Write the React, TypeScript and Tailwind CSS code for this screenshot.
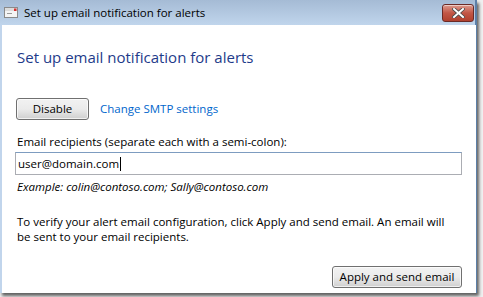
import React from 'react';

const MailIcon = () => (
  <svg width="14" height="11" viewBox="0 0 14 11">
    <rect x="0.5" y="0.5" width="13" height="10" fill="#f4f4f4" stroke="#8a8a8a" />
    <rect x="1" y="1" width="12" height="3" fill="#dcdcdc" />
    <line x1="3" y1="6.5" x2="8" y2="6.5" stroke="#9a9a9a" />
    <rect x="10" y="1.5" width="2.5" height="2.5" fill="#d83030" />
  </svg>
);

const CloseButton = () => (
  <div className="flex h-[18px] w-[32px] items-center justify-center rounded-[3px] border border-[#6b2a26] bg-gradient-to-b from-[#dc9a8e] via-[#c25646] to-[#b0402e] shadow-[inset_0_1px_0_rgba(255,255,255,0.5)]">
    <svg width="13" height="10" viewBox="0 0 13 10">
      <path d="M2 1 L11 9 M11 1 L2 9" stroke="#4a4a4a" strokeWidth="3.6" strokeLinecap="square" />
      <path d="M2 1 L11 9 M11 1 L2 9" stroke="#ffffff" strokeWidth="2" strokeLinecap="square" />
    </svg>
  </div>
);

const WinButton = ({ label, className }: { label: string; className?: string }) => (
  <button
    className={`flex h-[22px] items-center justify-center rounded-[3px] border border-[#707070] bg-gradient-to-b from-[#f2f2f2] via-[#ebebeb] to-[#cfcfcf] text-[11.5px] text-black shadow-[inset_0_0_0_1px_rgba(255,255,255,0.7)] ${className ?? ''}`}
  >
    {label}
  </button>
);

export default function App() {
  return (
    <div className="h-[297px] w-[483px] overflow-hidden bg-[#f0f0f0] font-['Segoe_UI','Open_Sans',sans-serif]">
      <div className="flex h-[293px] w-[477px] flex-col border-r-[2px] border-[#5c7fa8] shadow-[2px_3px_3px_rgba(0,0,0,0.6)]">
        <div className="flex h-[25px] items-center bg-gradient-to-b from-[#a5bbd5] to-[#c0d5ec] pl-[4px] pr-[1px]">
          <MailIcon />
          <span className="ml-[6px] text-[11.5px] text-black">Set up email notification for alerts</span>
          <div className="ml-auto">
            <CloseButton />
          </div>
        </div>
        <div className="flex flex-1 border-l-[2px] border-[#c1d5ec]">
          <div className="flex flex-1 flex-col bg-white pl-[15px] pr-[14px] text-[11.5px] text-black">
            <h1 className="mt-[22px] text-[15px] leading-[20px] text-[#1e3b8a]">Set up email notification for alerts</h1>
            <div className="mt-[31px] flex items-center">
              <WinButton label="Disable" className="w-[73px] -ml-[1px]" />
              <span className="ml-[11px] text-[#0066cc]">Change SMTP settings</span>
            </div>
            <div className="mt-[14px] leading-[15px]">Email recipients (separate each with a semi-colon):</div>
            <div className="-ml-[2px] mt-[3px] flex h-[23px] w-[447px] items-center border border-[#abadb3] border-t-[#7d9cc0] px-[2px]">
              <span>user@domain.com</span>
              <span className="ml-[1px] h-[14px] w-px bg-black" />
            </div>
            <div className="mt-[4px] italic leading-[15px]">Example: colin@contoso.com; Sally@contoso.com</div>
            <p className="mt-[20px] w-[430px] leading-[15px]">
              To verify your alert email configuration, click Apply and send email. An email will be sent to your email recipients.
            </p>
            <div className="mt-auto mb-[5px] flex justify-end">
              <WinButton label="Apply and send email" className="w-[130px]" />
            </div>
          </div>
        </div>
      </div>
    </div>
  );
}
